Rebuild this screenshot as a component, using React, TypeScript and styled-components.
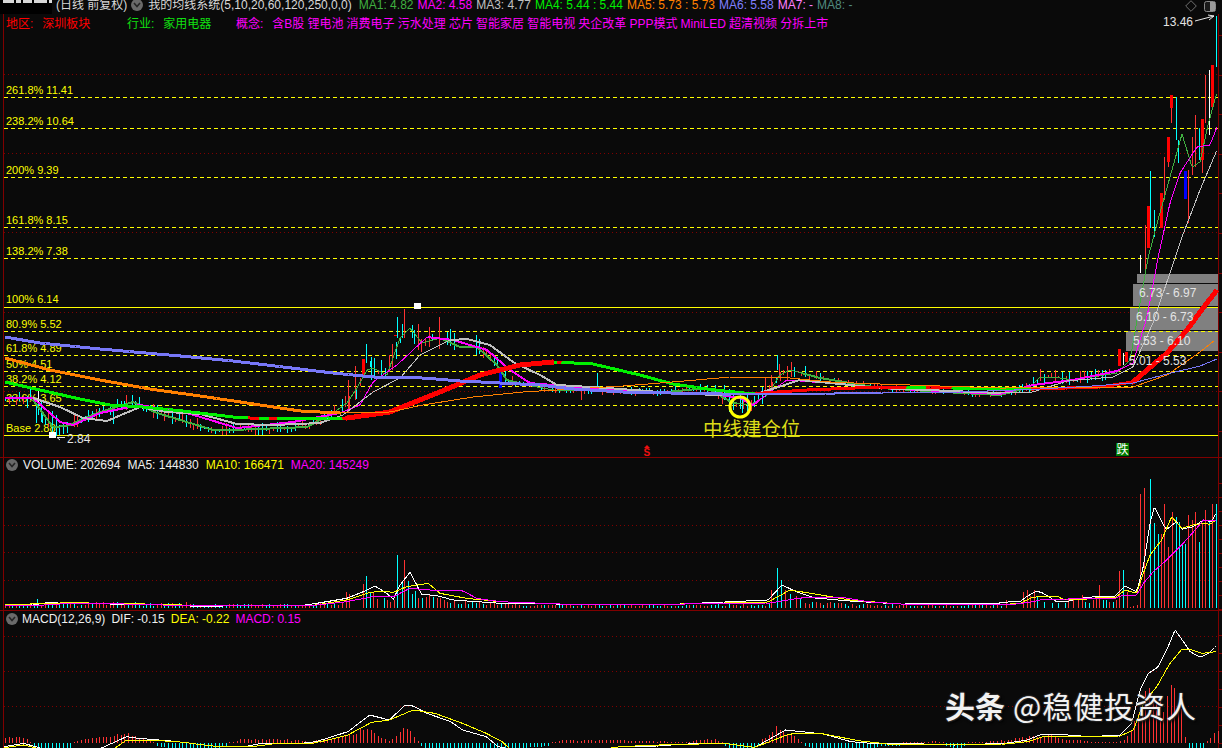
import React from "react";
import styled, { createGlobalStyle } from "styled-components";

type Pt = [number, number];
type Bar = [number, number, number, number, string];

const GlobalStyle = createGlobalStyle`
  html, body { margin: 0; padding: 0; background: #0a0a0a; overflow: hidden; }
`;

const Page = styled.div`
  width: 1222px;
  height: 748px;
  background: #0a0a0a;
  overflow: hidden;
  display: grid;
  grid-template-rows: 458px 153px 137px;
  font-family: "Liberation Sans", "Noto Sans CJK SC", sans-serif;
  font-size: 12px;
`;

const Pane = styled.section<{ $last?: boolean }>`
  position: relative;
  overflow: hidden;
  border-bottom: ${(p) => (p.$last ? "none" : "1px solid #800000")};
`;

const ChartSvg = styled.svg`
  display: block;
`;

const PriceLegend = styled.div`
  position: absolute;
  left: 0;
  top: 0;
  right: 0;
  display: flex;
  flex-direction: column;
  gap: 8px;
  white-space: nowrap;
`;

const TitleRow = styled.div`
  display: flex;
  align-items: center;
  gap: 4px;
  height: 10px;
  line-height: 10px;
  padding-left: 56px;
`;

const Item = styled.span<{ $c: string; $gapLeft?: number }>`
  color: ${(p) => p.$c};
  margin-left: ${(p) => p.$gapLeft ?? 0}px;
`;

const TagRow = styled.div`
  display: grid;
  grid-template-columns: 121px 109px 1fr;
  padding-left: 6px;
  line-height: 13px;
`;

const TagGroup = styled.div<{ $c: string }>`
  display: flex;
  gap: 9px;
  color: ${(p) => p.$c};
`;

const ConceptList = styled.span`
  word-spacing: -0.2px;
`;

const StockTag = styled.div`
  position: absolute;
  left: 0;
  top: 0;
  width: 52px;
  height: 14px;
  background: #000;
`;

const StockMarks = styled.div`
  display: flex;
  gap: 2px;
  padding-left: 3px;
`;

const StockMark = styled.span<{ $w: number }>`
  width: ${(p) => p.$w}px;
  height: 3px;
  background: #d8d8d8;
`;

const ToolIcons = styled.div`
  position: absolute;
  top: 0;
  left: 1185px;
  display: flex;
  align-items: center;
  gap: 7px;
`;

const PaneLegend = styled.div<{ $top: number; $gap: number }>`
  position: absolute;
  left: 6px;
  top: ${(p) => p.$top}px;
  display: flex;
  align-items: center;
  gap: ${(p) => p.$gap}px;
  line-height: 14px;
  white-space: nowrap;
`;

const ToggleDot = styled.span`
  width: 12px;
  height: 12px;
  border-radius: 50%;
  background: #6a6a6a;
  display: inline-flex;
  align-items: center;
  justify-content: center;
  margin-right: -2px;
  flex: none;
`;

const Watermark = styled.div`
  position: absolute;
  left: 945px;
  top: 74px;
  display: flex;
  align-items: center;
  gap: 8px;
  font-family: "Noto Sans CJK SC", "Liberation Sans", sans-serif;
  font-size: 30px;
  line-height: 40px;
  color: #f2f2f2;
  white-space: nowrap;
  text-shadow: 1px 1px 1px #222, 2px 2px 3px #000, 0 0 2px #777;
`;

const WatermarkBrand = styled.span`
  font-weight: 700;
`;

const WatermarkName = styled.span`
  letter-spacing: 0.9px;
`;

const FibLabel = styled.text`
  font-family: "Liberation Sans", sans-serif;
  font-size: 11px;
  fill: #ffff00;
`;

const RangeLabel = styled.text`
  font-family: "Liberation Sans", sans-serif;
  font-size: 12px;
  fill: #e4e4e4;
`;

const Annotation = styled.text`
  font-family: "Noto Sans CJK SC", sans-serif;
  font-size: 19.5px;
  fill: #dcdc18;
`;

const SignalS = styled.text`
  font-family: "Liberation Sans", sans-serif;
  font-weight: 700;
  font-size: 10px;
  fill: #f01010;
`;

const SignalDrop = styled.text`
  font-family: "Noto Sans CJK SC", sans-serif;
  font-size: 12px;
  fill: #fff;
`;

const Trace = styled.polyline`
  fill: none;
  shape-rendering: crispEdges;
  stroke-linejoin: round;
`;

const RED = "#ff3232";
const FAT = "#ff0000";
const CYAN = "#00ffff";
const AXIS = "#800000";

function rng(seed: number) {
  let s = seed;
  return () => {
    s = (s * 1664525 + 1013904223) % 4294967296;
    return s / 4294967296;
  };
}

function interp(pts: Pt[], x: number) {
  if (x <= pts[0][0]) return pts[0][1];
  for (let i = 1; i < pts.length; i++) {
    if (x <= pts[i][0]) {
      const [x0, y0] = pts[i - 1];
      const [x1, y1] = pts[i];
      return x1 === x0 ? y1 : y0 + ((y1 - y0) * (x - x0)) / (x1 - x0);
    }
  }
  return pts[pts.length - 1][1];
}

const within = (r: number[][], x: number) => r.some(([a, b]) => x >= a && x <= b);

const MA5: Pt[] = [[33,400],[53,427],[67,426],[97,413],[133,402],[157,413],[213,430],[233,430],[307,427],[333,413],[347,403],[357,388],[367,370],[373,368],[387,375],[400,338],[410,328],[422,343],[440,338],[460,347],[477,347],[497,365],[507,380],[527,385],[553,390],[580,390],[657,393],[707,388],[733,403],[750,405],[767,395],[780,375],[790,370],[820,378],[880,388],[960,393],[1000,395],[1030,387],[1040,377],[1053,377],[1073,380],[1117,373],[1130,360],[1148,258],[1158,220],[1170,177],[1182,134],[1192,167],[1200,162],[1208,125],[1217,92]];
const MA10: Pt[] = [[5,398],[33,398],[60,422],[73,425],[100,413],[140,405],[187,413],[237,428],[293,422],[340,413],[360,405],[373,382],[397,365],[427,337],[453,340],[487,350],[510,370],[530,383],[573,387],[640,392],[707,393],[740,398],[753,405],[770,392],[787,380],[820,382],[880,388],[1000,394],[1033,385],[1073,380],[1117,371],[1133,363],[1147,317],[1158,258],[1170,203],[1180,173],[1197,147],[1210,145],[1217,127]];
const MA20: Pt[] = [[33,398],[60,407],[83,418],[107,421],[140,407],[167,412],[200,414],[237,424],[273,425],[320,423],[343,415],[373,392],[400,378],[420,355],[450,340],[467,339],[490,345],[513,362],[540,375],[557,385],[607,388],[673,393],[717,395],[760,393],[800,380],[840,384],[880,388],[1000,393],[1033,392],[1067,381],[1113,377],[1133,367],[1153,323],[1175,258],[1182,237],[1200,190],[1217,150]];
const MA60: Pt[] = [[5,382],[40,390],[80,399],[110,405],[143,407],[183,411],[233,417],[250,418],[300,418],[340,419],[390,412],[440,392],[480,375],[520,365],[553,362],[593,364],[640,375],[673,384],[707,389],[753,394],[763,393],[807,390],[880,387],[1033,389],[1100,387],[1133,382],[1167,353],[1187,330],[1203,308],[1217,290]];
const MA120: Pt[] = [[5,358],[50,370],[100,380],[150,389],[200,396],[267,406],[300,411],[340,413],[390,412],[423,405],[473,397],[523,392],[573,389],[623,386],[673,382],[730,377],[780,377],[830,382],[880,384],[1000,388],[1133,387],[1167,375],[1200,352],[1215,340]];
const MA250: Pt[] = [[5,337],[40,343],[100,349],[180,356],[233,361],[300,369],[333,373],[373,377],[423,378],[460,381],[500,383],[540,385],[573,389],[623,392],[673,393],[723,394],[780,394],[880,393],[960,392],[1040,389],[1093,386],[1133,383],[1167,374],[1200,366],[1217,359]];

const RED60 = [[248,258],[268,275],[342,553],[556,560],[755,905],[925,950],[1030,1220]];

type TraceDef = { pts: Pt[]; color: (x: number) => string; width: (x: number) => number };

const traces: TraceDef[] = [
  { pts: MA5, color: () => "#40b040", width: (x) => (within([[33,330],[440,520],[600,735],[800,1030]], x) ? 2 : 1) },
  { pts: MA10, color: () => "#ff00ff", width: (x) => (within([[5,335],[427,760],[800,1120]], x) ? 2 : 1) },
  { pts: MA20, color: () => "#c0c0c0", width: (x) => (within([[33,335],[450,1000]], x) ? 2 : 1) },
  { pts: MA60, color: (x) => (within(RED60, x) ? "#ff0000" : "#00f000"), width: (x) => (x > 345 && x < 553 ? 5 : x > 1130 ? 5 : 3) },
  { pts: MA120, color: () => "#ff8000", width: (x) => (x < 340 ? 3 : 1) },
  { pts: MA250, color: () => "#7878f8", width: (x) => (x < 730 ? 3 : x < 880 ? 2 : 1) },
];

function runsOf(def: TraceDef) {
  const out: { pts: string; c: string; w: number }[] = [];
  const x0 = def.pts[0][0];
  const x1 = def.pts[def.pts.length - 1][0];
  let cur: string[] = [];
  let c = "";
  let w = 0;
  for (let x = x0; x <= x1; x += 1.5) {
    const nc = def.color(x);
    const nw = def.width(x);
    const p = `${x.toFixed(1)},${interp(def.pts, x).toFixed(1)}`;
    if (nc !== c || nw !== w) {
      if (cur.length) {
        cur.push(p);
        out.push({ pts: cur.join(" "), c, w });
      }
      cur = [];
      c = nc;
      w = nw;
    }
    cur.push(p);
  }
  if (cur.length > 1) out.push({ pts: cur.join(" "), c, w });
  return out;
}

function LineSet({ defs }: { defs: TraceDef[] }) {
  return (
    <>
      {defs.map((d, i) =>
        runsOf(d).map((r, j) => <Trace key={`${i}-${j}`} points={r.pts} stroke={r.c} strokeWidth={r.w} />)
      )}
    </>
  );
}

function Bars({ bars }: { bars: Bar[] }) {
  return (
    <g shapeRendering="crispEdges">
      {bars.map(([x, y0, y1, w, c], i) => (
        <rect key={i} x={Math.round(x - (w - 1) / 2)} y={y0} width={w} height={Math.max(1, y1 - y0)} fill={c} />
      ))}
    </g>
  );
}

/* ---------- main pane data ---------- */
const ampKeys: Pt[] = [[5,6],[30,12],[55,18],[70,8],[130,9],[340,7],[350,14],[390,16],[480,12],[520,5],[700,5],[730,12],[800,10],[830,4],[1000,4],[1040,8],[1112,8]];

const bigCandles: Bar[] = [
  [36,403,423,1,CYAN],[42,412,423,1,CYAN],[45,417,425,1,CYAN],[38,388,403,1,"#ffffff"],
  [113,405,424,1,CYAN],[126,395,410,1,RED],
  [348,380,412,1,RED],[355,366,400,1,RED],[363,359,377,3,FAT],[366,344,363,1,CYAN],[370,361,367,1,CYAN],
  [395,335,336,3,FAT],[397,317,338,1,CYAN],[402,324,338,1,CYAN],[404,309,338,1,RED],[412,325,338,1,CYAN],
  [418,338,350,1,RED],[439,317,338,1,RED],[500,372,388,3,"#0000ff"],[597,373,388,1,CYAN],[581,385,400,1,RED],
  [724,385,400,1,CYAN],[729,392,412,1,CYAN],[733,394,410,1,CYAN],[742,396,413,1,CYAN],
  [765,378,392,1,RED],[771,375,390,1,RED],[777,355,370,1,CYAN],[779,364,375,1,RED],
  [1119,349,366,3,FAT],[1123,353,365,1,"#ffffff"],[1126,352,362,3,FAT],
  [1140,255,273,1,"#ffffff"],[1145,225,270,1,RED],[1148,206,248,3,FAT],[1150,171,228,1,CYAN],
  [1154,210,237,1,CYAN],[1161,193,228,3,FAT],[1164,157,200,1,RED],[1168,137,162,3,FAT],[1168,162,167,1,RED],
  [1171,95,108,3,FAT],[1171,108,123,1,RED],[1176,97,140,1,CYAN],[1178,140,163,1,CYAN],[1185,171,199,3,"#0000ff"],
  [1188,170,223,1,RED],[1192,137,175,1,RED],[1195,115,167,1,RED],[1199,128,160,1,CYAN],[1202,119,160,3,FAT],
  [1202,160,173,1,RED],[1205,75,123,1,RED],[1209,70,135,1,"#ffffff"],[1212,65,107,3,FAT],[1216,16,67,1,CYAN],
];

const smallCandles: Bar[] = (() => {
  const r = rng(77);
  const out: Bar[] = [];
  for (let x = 5; x < 1112; x += 3.62) {
    const c = interp(MA5, x);
    const a = interp(ampKeys, x);
    const top = c - r() * a;
    const bot = c + r() * a * 0.8;
    const color = r() < 0.52 ? RED : CYAN;
    if (x > 340 && x < 500 && r() < 0.35) continue;
    out.push([x, Math.round(top), Math.round(bot), 1, color]);
  }
  return out;
})();

const fibDashed = [97, 128, 177, 227, 258, 331, 355, 371, 386, 405];
const fibLabels: [string, number][] = [
  ["261.8% 11.41", 94], ["238.2% 10.64", 125], ["200% 9.39", 174], ["161.8% 8.15", 224],
  ["138.2% 7.38", 255], ["100% 6.14", 303], ["80.9% 5.52", 328], ["61.8% 4.89", 352],
  ["50% 4.51", 368], ["38.2% 4.12", 383], ["23.6% 3.65", 402], ["Base 2.88", 432],
];
const rangeBoxes: [number, number, number][] = [[1137, 274, 9], [1133, 284, 22], [1130, 307, 23], [1126, 331, 20]];
const rangeLabels: [string, number, number][] = [
  ["6.73 - 6.97", 1139, 297], ["6.10 - 6.73", 1136, 321], ["5.53 - 6.10", 1133, 345], ["5.01 - 5.53", 1129, 365],
];

/* ---------- volume pane data ---------- */
const z7 = (a: Pt[]) => a.map(([x, y]) => [x / 3, 455 + y / 3] as Pt);
const z8 = (a: Pt[]) => a.map(([x, y]) => [1000 + x / 3, 460 + y / 3] as Pt);
const z9 = (a: Pt[]) => a.map(([x, y]) => [x / 2.53, 605 + y / 3] as Pt);
const z11 = (a: Pt[]) => a.map(([x, y]) => [620 + x / 2.6, 640 + y / 3] as Pt);

const VOL_BASE = 608;
const volWhite: Pt[] = [
  ...z7([[15,448],[100,450],[140,443],[210,445],[400,448],[500,449],[600,455],[700,452],[900,452],[950,445],[1040,430],[1090,410],[1125,393],[1160,415],[1180,433],[1200,390],[1230,352],[1265,418],[1310,422],[1360,435],[1500,445]]),
  [560,604],[680,604],[768,600],[782,585],[797,592],[815,598],[850,601],[900,604],[1000,603],
  ...z8([[30,425],[60,425],[80,410],[110,393],[130,400],[170,425],[200,425],[240,415],[300,408],[345,408],[375,378],[410,395],[430,320],[450,190],[463,140],[490,195],[500,208],[530,185],[545,208],[580,200],[610,180],[635,185],[648,160]]),
].sort((a, b) => a[0] - b[0]);
const volYellow: Pt[] = [
  ...z7([[15,448],[60,448],[210,443],[400,446],[550,450],[950,450],[1040,435],[1100,415],[1140,408],[1180,412],[1220,395],[1285,385],[1320,415],[1400,430],[1500,440]]),
  [560,604],[680,604],[768,602],[790,590],[815,594],[850,600],[900,604],[1000,604],
  ...z8([[30,432],[60,430],[90,415],[120,408],[170,408],[190,418],[240,420],[300,412],[345,413],[375,390],[410,400],[430,340],[450,285],[465,265],[485,240],[515,170],[545,205],[580,195],[610,190],[630,193],[648,180]]),
].sort((a, b) => a[0] - b[0]);
const volMagenta: Pt[] = [
  ...z7([[15,452],[100,452],[200,446],[400,447],[550,452],[950,450],[1040,440],[1120,425],[1180,425],[1230,400],[1290,405],[1390,408],[1430,430],[1500,440]]),
  [560,604],[680,604],[770,603],[800,598],[840,597],[870,602],[900,604],[1000,604],
  ...z8([[50,432],[100,425],[120,420],[200,417],[300,415],[345,415],[370,405],[410,405],[430,370],[460,335],[500,300],[545,255],[590,205],[610,180],[648,183]]),
].sort((a, b) => a[0] - b[0]);

const volExplicit: [number, number, string][] = [
  [37,9,CYAN],[113,6,RED],[346,16,RED],[349,14,RED],[363,24,RED],[366,32,CYAN],[370,15,CYAN],[373,16,RED],[377,9,RED],
  [384,10,CYAN],[387,8,RED],[390,6,RED],[394,8,RED],[397,53,CYAN],[402,26,CYAN],[404,48,RED],[408,27,CYAN],[412,14,CYAN],
  [415,17,CYAN],[418,10,RED],[422,10,CYAN],[426,11,RED],[429,14,RED],[433,11,CYAN],[437,10,RED],[440,10,RED],[444,8,RED],
  [771,18,RED],[777,40,CYAN],[781,28,CYAN],[785,18,RED],[790,14,CYAN],[796,12,RED],[800,9,CYAN],
  [1006,8,RED],[1023,16,RED],[1027,18,RED],[1030,12,RED],[1034,18,RED],[1037,11,CYAN],[1044,6,CYAN],[1052,5,CYAN],[1058,5,CYAN],
  [1065,5,CYAN],[1068,8,RED],[1073,8,RED],[1078,8,RED],[1082,13,RED],[1085,6,CYAN],[1089,5,CYAN],[1093,8,RED],[1096,9,RED],
  [1099,23,RED],[1103,8,CYAN],[1106,8,CYAN],[1109,6,RED],[1113,6,CYAN],[1116,8,RED],[1119,37,RED],[1123,38,CYAN],[1127,16,RED],
  [1130,1,RED],[1133,2,RED],[1137,3,RED],[1140,114,RED],[1144,120,RED],[1150,129,CYAN],[1154,85,CYAN],[1158,74,CYAN],
  [1161,74,RED],[1164,104,RED],[1168,61,RED],[1172,96,RED],[1176,91,CYAN],[1179,86,CYAN],[1182,63,CYAN],[1185,64,CYAN],
  [1188,93,RED],[1192,88,RED],[1195,96,RED],[1199,66,CYAN],[1202,84,RED],[1205,98,RED],[1209,86,CYAN],[1212,104,RED],[1216,104,CYAN],
];
const volKeys: Pt[] = [[5,3],[30,4],[120,5],[300,3],[340,5],[450,7],[520,3],[760,3],[810,6],[850,3],[1000,3]];
const volBars: Bar[] = (() => {
  const r = rng(19);
  const out: Bar[] = [];
  for (let x = 5; x < 1004; x += 3.62) {
    if (volExplicit.some(([ex]) => Math.abs(ex - x) < 2) || (x > 345 && x < 445) || (x > 770 && x < 802)) continue;
    const h = Math.max(1, Math.round(interp(volKeys, x) * (0.5 + r() * 0.8)));
    out.push([x, VOL_BASE - h, VOL_BASE, 1, r() < 0.5 ? RED : CYAN]);
  }
  volExplicit.forEach(([x, h, c]) => out.push([x, VOL_BASE - h, VOL_BASE, 1, c]));
  return out;
})();

/* ---------- MACD pane data ---------- */
const MACD_BASE = 743;
const dif: Pt[] = [
  ...z9([[10,425],[60,415],[110,432],[255,430],[320,395],[350,400],[450,410],[550,425],[620,425],[660,415],[760,415],[800,410],[880,380],[935,330],[985,345],[1025,300],[1045,303],[1080,325],[1140,350],[1170,375],[1230,395],[1260,425],[1290,432],[1400,432],[1530,432]]),
  ...z11([[0,320],[100,318],[170,312],[270,310],[350,322],[400,290],[430,270],[530,282],[600,305],[650,310],[800,312],[870,315],[1000,310],[1060,300],[1090,285],[1140,283],[1220,290]]),
  ...z8([[360,825],[395,790],[420,690],[445,640],[475,620],[500,570],[525,510],[550,545],[570,575],[600,592],[625,580],[648,558]]),
].sort((a, b) => a[0] - b[0]);
const dea: Pt[] = [
  ...z9([[10,428],[60,420],[100,432],[290,430],[320,405],[370,405],[450,410],[550,425],[640,425],[700,415],[790,415],[830,405],[880,390],[940,352],[985,345],[1045,315],[1100,325],[1170,355],[1230,385],[1270,410],[1290,432],[1530,432]]),
  ...z11([[0,320],[100,315],[270,310],[350,322],[400,300],[440,282],[520,280],[620,302],[700,313],[880,314],[1000,312],[1060,305],[1100,290],[1220,290]]),
  ...z8([[360,828],[400,810],[430,730],[470,680],[510,610],[545,568],[570,568],[605,580],[648,575]]),
].sort((a, b) => a[0] - b[0]);
const histKeys: Pt[] = [[5,6],[25,6],[30,2],[36,-7],[67,-7],[72,0],[80,3],[100,6],[125,10],[138,6],[150,2],[160,-2],[175,-5],[215,-5],[240,4],[275,4],[295,3],[310,1],[318,3],[340,6],[355,11],[368,17],[375,10],[388,2],[392,5],[402,15],[408,16],[415,6],[420,0],[425,-5],[500,-8],[520,-4],[540,-2],[555,1],[560,3],[620,3],[650,2],[690,1],[697,4],[712,4],[725,0],[730,-6],[755,-6],[760,3],[770,10],[778,18],[785,12],[795,6],[805,-1],[823,-8],[870,-6],[880,-1],[925,1],[933,3],[950,-2],[960,-4],[966,0],[1005,3],[1040,8],[1050,10],[1060,4],[1100,1],[1117,1],[1123,3],[1130,9],[1133,19],[1140,33],[1146,55],[1150,55],[1154,43],[1158,49],[1163,29],[1168,51],[1171,59],[1175,54],[1179,23],[1182,36],[1185,6],[1188,-5],[1203,-5],[1205,0],[1212,7],[1216,12]];
const macdBars: Bar[] = (() => {
  const r = rng(5);
  const out: Bar[] = [];
  for (let x = 5; x < 1218; x += 3.62) {
    const n = x > 1120 ? 1 : 0.75 + r() * 0.35;
    const v = interp(histKeys, x) * n;
    const h = Math.max(1, Math.round(Math.abs(v)));
    out.push(v >= 0 ? [x, MACD_BASE - h, MACD_BASE, 1, RED] : [x, MACD_BASE, MACD_BASE + h + 2, 1, CYAN]);
  }
  return out;
})();

const volDefs: TraceDef[] = [
  { pts: volWhite, color: () => "#ffffff", width: () => 1 },
  { pts: volYellow, color: () => "#ffff00", width: () => 1 },
  { pts: volMagenta, color: () => "#ff00ff", width: () => 1 },
];
const macdDefs: TraceDef[] = [
  { pts: dif, color: () => "#ffffff", width: () => 1 },
  { pts: dea, color: () => "#ffff00", width: () => 1 },
];

/* ---------- shared chart furniture ---------- */
function Frame({ top, bottom, dotted, ticks }: { top: number; bottom: number; dotted: number[]; ticks: number[] }) {
  return (
    <g shapeRendering="crispEdges">
      <line x1={3.5} y1={top} x2={3.5} y2={bottom} stroke={AXIS} />
      <line x1={1218.5} y1={top} x2={1218.5} y2={bottom} stroke={AXIS} />
      {dotted.map((y) => (
        <line key={y} x1={4} y1={y + 0.5} x2={1218} y2={y + 0.5} stroke={AXIS} strokeDasharray="1 3" />
      ))}
      {ticks.map((y) => (
        <line key={y} x1={1219} y1={y + 0.5} x2={1222} y2={y + 0.5} stroke={AXIS} />
      ))}
    </g>
  );
}

function Chevron() {
  return (
    <ToggleDot>
      <svg width="8" height="6" viewBox="0 0 8 6">
        <path d="M1 1 L4 4.5 L7 1" fill="none" stroke="#262626" strokeWidth="1.6" />
      </svg>
    </ToggleDot>
  );
}

const range = (from: number, step: number, to: number) => {
  const out: number[] = [];
  for (let y = from; y <= to; y += step) out.push(Math.round(y));
  return out;
};

function PriceChart() {
  return (
    <ChartSvg width={1222} height={457} viewBox="0 0 1222 457">
      <Frame top={14} bottom={457} dotted={[74, 153, 232, 312, 391]} ticks={range(35, 39.6, 450)} />
      <g shapeRendering="crispEdges">
        {rangeBoxes.map(([x, y, h]) => (
          <rect key={y} x={x} y={y} width={1218 - x} height={h} fill="#808080" />
        ))}
        {fibDashed.map((y) => (
          <line key={y} x1={4} y1={y + 0.5} x2={1218} y2={y + 0.5} stroke="#ffff00" strokeDasharray="4 3" />
        ))}
        <line x1={4} y1={307.5} x2={1218} y2={307.5} stroke="#ffff00" />
        <line x1={4} y1={435.5} x2={1218} y2={435.5} stroke="#ffff00" />
      </g>
      {fibLabels.map(([t, y]) => (
        <FibLabel key={t} x={6} y={y}>{t}</FibLabel>
      ))}
      <Bars bars={smallCandles} />
      <Bars bars={bigCandles} />
      <LineSet defs={traces} />
      {rangeLabels.map(([t, x, y]) => (
        <RangeLabel key={t} x={x} y={y}>{t}</RangeLabel>
      ))}
      <g shapeRendering="crispEdges">
        <rect x={414} y={303} width={7} height={6} fill="#ffffff" />
        <rect x={49} y={432} width={7} height={6} fill="#ffffff" />
      </g>
      <path d="M65 437.5 H57 L60 440" fill="none" stroke="#e8e8e8" />
      <RangeLabel x={67} y={443}>2.84</RangeLabel>
      <RangeLabel x={1163} y={26}>13.46</RangeLabel>
      <path d="M1195 21 L1214 16 M1208 15 L1214 16 L1209 20" fill="none" stroke="#e8e8e8" />
      <circle cx={740} cy={407} r={10} fill="none" stroke="#ffff00" strokeWidth={3} />
      <Annotation x={703} y={436}>中线建仓位</Annotation>
      <path d="M647 445 L650 448 H644 Z" fill="#f01010" />
      <SignalS x={643.5} y={455.5}>S</SignalS>
      <rect x={1116} y={443} width={13} height={13} fill="#007a00" shapeRendering="crispEdges" />
      <SignalDrop x={1116.5} y={454}>跌</SignalDrop>
    </ChartSvg>
  );
}

function VolumeChart() {
  return (
    <ChartSvg width={1222} height={152} viewBox="0 458 1222 152">
      <Frame top={458} bottom={610} dotted={[497, 525, 552, 580]} ticks={range(483, 14, 609)} />
      <Bars bars={volBars} />
      <LineSet defs={volDefs} />
    </ChartSvg>
  );
}

function MacdChart() {
  return (
    <ChartSvg width={1222} height={137} viewBox="0 611 1222 137">
      <Frame top={611} bottom={748} dotted={[636, 671, 706]} ticks={range(635, 18, 745)} />
      <Bars bars={macdBars} />
      <LineSet defs={macdDefs} />
    </ChartSvg>
  );
}

export default function App() {
  return (
    <Page>
      <GlobalStyle />
      <Pane>
        <PriceChart />
        <PriceLegend>
          <TitleRow>
            <Item $c="#d8d8d8">(日线 前复权)</Item>
            <Chevron />
            <Item $c="#d8d8d8" $gapLeft={3}>我的均线系统(5,10,20,60,120,250,0,0)</Item>
            <Item $c="#40b040" $gapLeft={3}>MA1: 4.82</Item>
            <Item $c="#ff00ff">MA2: 4.58</Item>
            <Item $c="#c0c0c0">MA3: 4.77</Item>
            <Item $c="#00f000">MA4: 5.44 : 5.44</Item>
            <Item $c="#ff8000">MA5: 5.73 : 5.73</Item>
            <Item $c="#8080ff">MA6: 5.58</Item>
            <Item $c="#ff80ff">MA7: -</Item>
            <Item $c="#508a80">MA8: -</Item>
          </TitleRow>
          <TagRow>
            <TagGroup $c="#ff0000">
              <span>地区:</span>
              <span>深圳板块</span>
            </TagGroup>
            <TagGroup $c="#10e010">
              <span>行业:</span>
              <span>家用电器</span>
            </TagGroup>
            <TagGroup $c="#ff00ff">
              <span>概念:</span>
              <ConceptList>含B股 锂电池 消费电子 污水处理 芯片 智能家居 智能电视 央企改革 PPP模式 MiniLED 超清视频 分拆上市</ConceptList>
            </TagGroup>
          </TagRow>
        </PriceLegend>
        <StockTag>
          <StockMarks>
            <StockMark $w={11} />
            <StockMark $w={5} />
            <StockMark $w={9} />
            <StockMark $w={13} />
            <StockMark $w={3} />
          </StockMarks>
        </StockTag>
        <ToolIcons>
          <svg width="12" height="12" viewBox="0 0 12 12">
            <path d="M6 .7 L11.3 6 L6 11.3 L.7 6 Z" fill="none" stroke="#707070" />
          </svg>
          <svg width="12" height="11" viewBox="0 0 12 11">
            <rect x=".5" y=".5" width="11" height="10" rx="2" fill="#1a1a1a" stroke="#888" />
            <rect x="6" y="1" width="5" height="9" fill="#9a9a9a" />
          </svg>
        </ToolIcons>
      </Pane>
      <Pane>
        <VolumeChart />
        <PaneLegend $top={0} $gap={7}>
          <Chevron />
          <Item $c="#f0f0f0">VOLUME: 202694</Item>
          <Item $c="#f0f0f0">MA5: 144830</Item>
          <Item $c="#ffff00">MA10: 166471</Item>
          <Item $c="#ff00ff">MA20: 145249</Item>
        </PaneLegend>
      </Pane>
      <Pane $last>
        <MacdChart />
        <PaneLegend $top={1} $gap={6}>
          <Chevron />
          <Item $c="#f0f0f0">MACD(12,26,9)</Item>
          <Item $c="#f0f0f0">DIF: -0.15</Item>
          <Item $c="#ffff00">DEA: -0.22</Item>
          <Item $c="#ff00ff">MACD: 0.15</Item>
        </PaneLegend>
        <Watermark>
          <WatermarkBrand>头条</WatermarkBrand>
          <WatermarkName>@稳健投资人</WatermarkName>
        </Watermark>
      </Pane>
    </Page>
  );
}
